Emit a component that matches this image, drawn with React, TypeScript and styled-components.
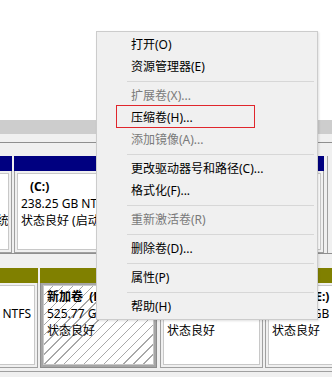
import React from 'react';
import styled, { createGlobalStyle } from 'styled-components';

const GlobalStyle = createGlobalStyle`
  html, body {
    margin: 0;
    padding: 0;
    background: #fff;
  }
  body {
    font-family: "Noto Sans", "Noto Sans CJK SC", sans-serif;
    font-size: 12px;
    color: #000;
  }
`

const Page = styled.div`
  position: relative;
  width: 332px;
  height: 377px;
  overflow: hidden;
  display: flex;
  flex-direction: column;
`
const ListPane = styled.div`
  height: 120px;
  flex-shrink: 0;
  background: #fff;
`
const Splitter = styled.div`
  height: 14px;
  flex-shrink: 0;
  background: #cdcdcd;
`
const GraphPane = styled.div`
  flex: 1;
  display: flex;
  flex-direction: column;
  padding-top: 8px;
  background: #f0f0f0;
`
const DiskRow = styled.div<{ $top: number; $height: number }>`
  display: flex;
  gap: 2px;
  height: ${p => p.$height}px;
  padding-top: ${p => p.$top}px;
  border-top: 1px solid #8f8f8f;
  flex-shrink: 0;
`
const RowEnd = styled.div`
  width: 8px;
  margin-left: 1px;
  border-left: 1px solid #a0a0a0;
  flex-shrink: 0;
`
const Footer = styled.div`
  margin-top: 3px;
  flex: 1;
  border-top: 1px solid #a0a0a0;
`
const Cell = styled.div<{ $width: number; $shift?: number }>`
  display: flex;
  flex-direction: column;
  flex-shrink: 0;
  width: ${p => p.$width}px;
  margin-left: ${p => p.$shift || 0}px;
`
const CellHeader = styled.div<{ $color: string }>`
  height: 15px;
  flex-shrink: 0;
  background: ${p => p.$color};
`
const CellBody = styled.div<{ $selected?: boolean }>`
  flex: 1;
  display: flex;
  padding: 2px;
  border: 1px solid ${p => (p.$selected ? '#8c8c8c' : '#a0a0a0')};
  border-top: none;
  background: ${p => (p.$selected ? '#a6a6a6' : '#f0f0f0')};
  min-width: 0;
`
const CellInner = styled.div<{ $pad: number; $hatched?: boolean }>`
  flex: 1;
  min-width: 0;
  overflow: hidden;
  white-space: pre;
  padding: ${p => p.$pad}px 3px 0;
  border: 1px solid #c8c8c8;
  line-height: 17px;
  background: ${p =>
    p.$hatched
      ? 'repeating-linear-gradient(135deg, #fff 0px, #fff 6px, #a8a8a8 6px, #a8a8a8 7px)'
      : '#fff'};
`
const VolTitle = styled.div<{ $indent?: number }>`
  font-weight: bold;
  margin-left: ${p => p.$indent || 0}px;
`
const VolLine = styled.div``

const Menu = styled.div`
  position: absolute;
  left: 96px;
  top: 31px;
  width: 222px;
  box-sizing: border-box;
  padding: 2px 2px 1px;
  border: 1px solid #cccccc;
  background: #f0f0f0;
  box-shadow: 1px 1px 2px rgba(0, 0, 0, 0.12);
`
const MenuItem = styled.div<{ $disabled?: boolean; $marked?: boolean }>`
  position: relative;
  height: 22px;
  line-height: 22px;
  padding-left: 32px;
  color: ${p => (p.$disabled ? '#7a7a7a' : '#000')};
  white-space: nowrap;
  ${p =>
    p.$marked &&
    `
    &::after {
      content: '';
      position: absolute;
      left: 17px;
      top: -2px;
      width: 139px;
      height: 23px;
      box-sizing: border-box;
      border: 1px solid #e0262c;
    }
  `}
`
const Separator = styled.div`
  height: 7px;
  display: flex;
  align-items: center;
  padding-left: 28px;
  padding-right: 1px;
  &::before {
    content: '';
    flex: 1;
    height: 1px;
    background: #d7d7d7;
  }
`

type Entry = { label?: string; disabled?: boolean; marked?: boolean; sep?: boolean }

const entries: Entry[] = [
  { label: '打开(O)' },
  { label: '资源管理器(E)' },
  { sep: true },
  { label: '扩展卷(X)...', disabled: true },
  { label: '压缩卷(H)...', marked: true },
  { label: '添加镜像(A)...', disabled: true },
  { sep: true },
  { label: '更改驱动器号和路径(C)...' },
  { label: '格式化(F)...' },
  { sep: true },
  { label: '重新激活卷(R)', disabled: true },
  { sep: true },
  { label: '删除卷(D)...' },
  { sep: true },
  { label: '属性(P)' },
  { sep: true },
  { label: '帮助(H)' },
]

const NAVY = '#000080'
const OLIVE = '#808000'

function ContextMenu() {
  return (
    <Menu>
      {entries.map((e, i) =>
        e.sep ? (
          <Separator key={i} />
        ) : (
          <MenuItem key={i} $disabled={e.disabled} $marked={e.marked}>
            {e.label}
          </MenuItem>
        )
      )}
    </Menu>
  )
}

export default function App() {
  return (
    <Page>
      <GlobalStyle />
      <ListPane />
      <Splitter />
      <GraphPane>
        <DiskRow $top={13} $height={97}>
          <Cell $width={109} $shift={-97}>
            <CellHeader $color={NAVY} />
            <CellBody>
              <CellInner $pad={4}>
                <VolTitle> </VolTitle>
                <VolLine>100 MB FAT32</VolLine>
                <VolLine>状态良好 (EFI 系统分区)</VolLine>
              </CellInner>
            </CellBody>
          </Cell>
          <Cell $width={310}>
            <CellHeader $color={NAVY} />
            <CellBody>
              <CellInner $pad={4}>
                <VolTitle $indent={9}>(C:)</VolTitle>
                <VolLine>238.25 GB NTFS</VolLine>
                <VolLine>状态良好 (启动, 页面文件, 故障转储, 主分区)</VolLine>
              </CellInner>
            </CellBody>
          </Cell>
          <RowEnd />
        </DiskRow>
        <DiskRow $top={14} $height={100}>
          <Cell $width={105} $shift={-67}>
            <CellHeader $color={OLIVE} />
            <CellBody>
              <CellInner $pad={2}>
                <VolTitle>(系统保留)</VolTitle>
                <VolLine>450.00 MB NTFS</VolLine>
                <VolLine>状态良好</VolLine>
              </CellInner>
            </CellBody>
          </Cell>
          <Cell $width={117}>
            <CellHeader $color={OLIVE} />
            <CellBody $selected>
              <CellInner $pad={2} $hatched>
                <VolTitle>新加卷  (F:)</VolTitle>
                <VolLine>525.77 GB NTFS</VolLine>
                <VolLine>状态良好</VolLine>
              </CellInner>
            </CellBody>
          </Cell>
          <Cell $width={103} $shift={1}>
            <CellHeader $color={OLIVE} />
            <CellBody>
              <CellInner $pad={2}>
                <VolTitle>新加卷  (G:)</VolTitle>
                <VolLine>200.00 GB NTFS</VolLine>
                <VolLine>状态良好</VolLine>
              </CellInner>
            </CellBody>
          </Cell>
          <Cell $width={100}>
            <CellHeader $color={OLIVE} />
            <CellBody>
              <CellInner $pad={2}>
                <VolTitle>新加卷 (E:)</VolTitle>
                <VolLine>465.76 GB NTFS</VolLine>
                <VolLine>状态良好</VolLine>
              </CellInner>
            </CellBody>
          </Cell>
        </DiskRow>
        <Footer />
      </GraphPane>
      <ContextMenu />
    </Page>
  )
}
